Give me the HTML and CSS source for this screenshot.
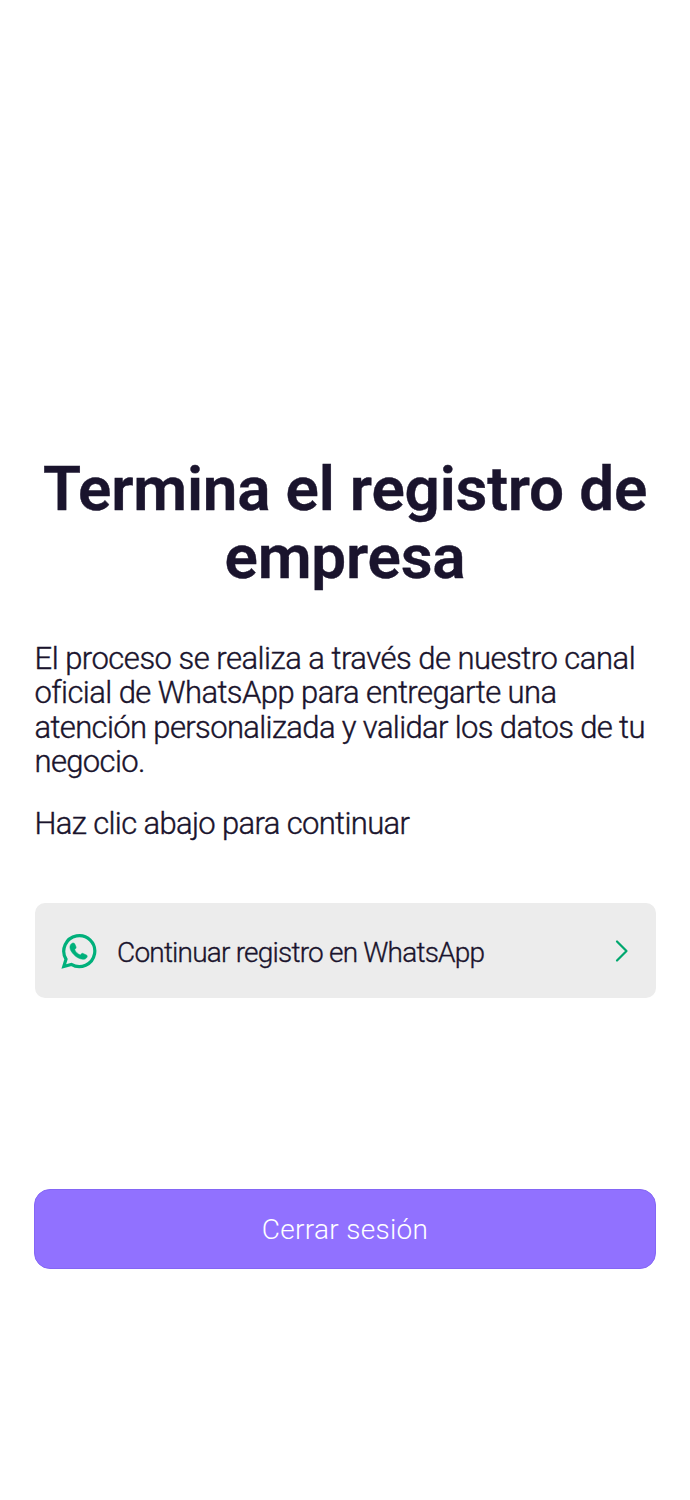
FILE: index.html
```html
<!DOCTYPE html>
<html lang="es">
<head>
<meta charset="utf-8">
<title>Registro de empresa</title>
<link rel="stylesheet" href="styles.css">
</head>
<body>
<main class="screen">
  <h1 class="title">Termina el registro de<br>empresa</h1>
  <p class="copy"><span class="line-first">El proceso se realiza a través de nuestro canal</span><br><span class="line-second">oficial de WhatsApp para entregarte una</span><br>atención personalizada y validar los datos de tu<br>negocio.</p>
  <p class="copy hint">Haz clic abajo para continuar</p>
  <a class="whatsapp" href="#">
    <svg class="logo" viewBox="0 0 36 36"><path class="ring" d="M2.8 33.5 5 26.1A15.5 15.5 0 1 1 10.3 31.4Z"/><path class="phone" d="M11.2 10.2c1-.4 2.1-.3 2.6.7l1.2 2.8c.4 1-.1 1.7-1.3 3 1.2 2.4 3 4.2 5.6 5.3 1.2-1.4 1.8-2 2.7-1.6l3.4 1.6c1.1.5 1 1.2.6 2.2-.6 1.4-2.5 2.3-4.3 2.1-3.5-.4-6.3-2-8.7-4.5-2.2-2.3-4.1-4.9-4.100-7.600 0-1.700.9-3.400 2.300-4Z"/></svg>
    <span class="label">Continuar registro en WhatsApp</span>
    <svg class="chevron" viewBox="0 0 14 24"><path d="M2 2.500 11.500 12 2 21.500"/></svg>
  </a>
  <button class="logout">Cerrar sesión</button>
</main>
</body>
</html>
```
FILE: styles.css
```css
* { box-sizing: border-box; }
body { margin: 0; background: #fff; color: #1a142d; font-family: Roboto, sans-serif; }
.screen { width: 690px; height: 1500px; padding: 455px 34px 0; display: flex; flex-direction: column; }
.title { margin: 0; font-size: 62px; line-height: 68px; font-weight: 600; letter-spacing: -.2px; text-align: center; white-space: nowrap; -webkit-text-stroke: .4px #1a142d; }
.copy { margin: 51px 0 0; padding-left: .5px; font-size: 31px; line-height: 34.4px; font-weight: 300; letter-spacing: -.64px; white-space: nowrap; -webkit-text-stroke: .4px #1a142d; }
.line-first { letter-spacing: -.5px; }
.line-second { letter-spacing: -.57px; }
.hint { margin-top: 27px; }
.whatsapp { margin: 62px .5px 0; height: 95.4px; padding: 0 26.5px; border-radius: 10px; background: #ececec; display: flex; align-items: center; color: inherit; text-decoration: none; }
.logo { width: 36px; height: 36px; }
.ring { fill: none; stroke: #00b07b; stroke-width: 3.2; }
.phone { fill: #00b07b; stroke: #00b07b; stroke-width: .5; }
.label { margin-left: 20px; padding-top: 3px; font-size: 28px; font-weight: 300; letter-spacing: -.79px; white-space: nowrap; -webkit-text-stroke: .35px #1a142d; }
.chevron { width: 14px; height: 24px; margin-left: auto; fill: none; stroke: #00a76e; stroke-width: 2.2; stroke-linecap: round; stroke-linejoin: round; }
.logout { margin: 190.200px 0 0; padding: 2px 0 0; height: 80.500px; border: 1px solid #8466f5; border-radius: 16px; background: #9171ff; color: #fff; font: 300 28px Roboto, sans-serif; letter-spacing: .3px; }
```
